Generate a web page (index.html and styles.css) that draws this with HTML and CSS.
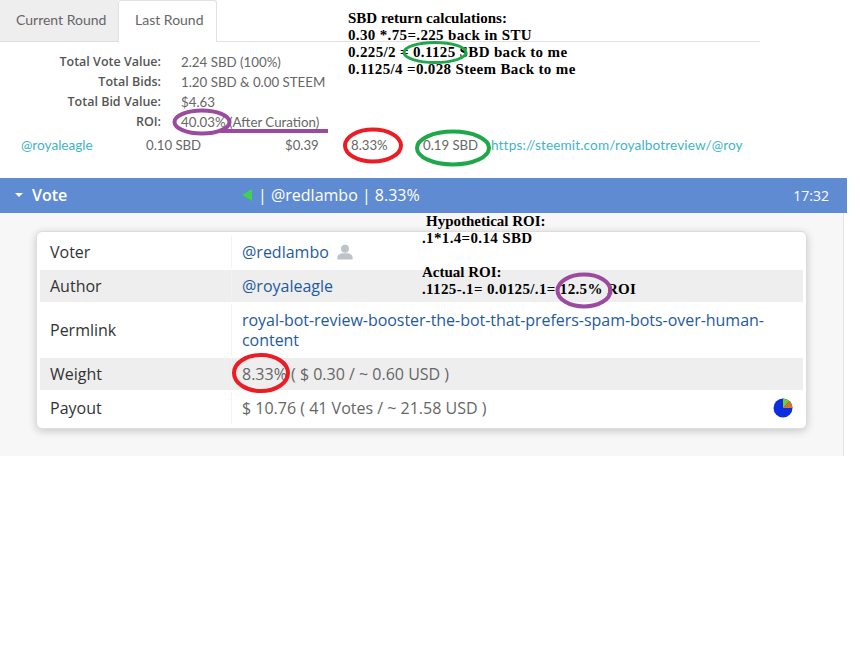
FILE: index.html
```html
<!DOCTYPE html>
<html lang="en">
<head>
	<meta charset="UTF-8">
	<title>Vote</title>
	<link rel="stylesheet" href="styles.css">
</head>
<body>
	<section class="round">
		<nav class="tabs">
			<a class="tab" href="javascript:;">Current Round</a>
			<a class="tab active" href="javascript:;">Last Round</a>
		</nav>
		<dl class="stats">
			<dt>Total Vote Value:</dt><dd>2.24 SBD (100%)</dd>
			<dt>Total Bids:</dt><dd>1.20 SBD &amp; 0.00 STEEM</dd>
			<dt>Total Bid Value:</dt><dd>$4.63</dd>
			<dt>ROI:</dt><dd>40.03% (After Curation)</dd>
		</dl>
		<div class="bid">
			<a class="bid-user" href="javascript:;">@royaleagle</a>
			<span class="bid-amount">0.10 SBD</span>
			<span class="bid-value">$0.39</span>
			<span class="bid-weight">8.33%</span>
			<span class="bid-return">0.19 SBD</span>
			<a class="bid-link" href="javascript:;">https://steemit.com/royalbotreview/@roy</a>
		</div>
	</section>

	<section class="vote">
		<header class="vote-bar">
			<span class="vote-title"><i class="caret"></i>Vote</span>
			<span class="vote-info"><i class="arrow"></i>| @redlambo | 8.33%</span>
			<span class="vote-time">17:32</span>
		</header>
		<div class="vote-body">
			<div class="card">
				<div class="row">
					<div class="key">Voter</div>
					<div class="val"><a href="javascript:;">@redlambo</a>
						<svg class="person" width="16" height="16" viewBox="0 0 17 16"><circle cx="8.500" cy="4.500" r="4.200"/><path d="M0.500 16v-2.500c0-2.600 3-4 5-4.300h6c2 .3 5 1.700 5 4.300V16z"/></svg>
					</div>
				</div>
				<div class="row">
					<div class="key">Author</div>
					<div class="val"><a href="javascript:;">@royaleagle</a></div>
				</div>
				<div class="row">
					<div class="key">Permlink</div>
					<div class="val"><a class="permlink" href="javascript:;">royal-bot-review-booster-the-bot-that-prefers-spam-bots-over-human-content</a></div>
				</div>
				<div class="row">
					<div class="key">Weight</div>
					<div class="val">8.33% ( $ 0.30 / ~ 0.60 USD )</div>
				</div>
				<div class="row">
					<div class="key">Payout</div>
					<div class="val val-split">$ 10.76 ( 41 Votes / ~ 21.58 USD )
						<svg width="20" height="20" viewBox="0 0 20 20"><circle cx="10" cy="10" r="9.500" fill="#0b2fe0"/><path d="M10 10V.5A9.500 9.500 0 0 1 16.500 3z" fill="#6fce3c"/><path d="M10 10l6.500-7a9.500 9.500 0 0 1 3 7z" fill="#d2762a"/></svg>
					</div>
				</div>
			</div>
		</div>
	</section>

	<!-- notes drawn over the screenshot -->
	<div class="note note-sbd">SBD return calculations:<br><span class="digits">0.30 *.75=.225 back in STU</span><br><span class="digits">0.225/2 = 0.1125 SBD back to me</span><br><span class="digits">0.1125/4 =0.028 Steem Back to me</span></div>
	<div class="note note-hypo">Hypothetical ROI:</div>
	<div class="note note-roi"><span class="digits">.1*1.4=0.14 SBD</span><br><br>Actual ROI:<br><span class="digits">.1125-.1= 0.0125/.1= 12.5% ROI</span></div>

	<svg class="marks" width="860" height="649" viewBox="0 0 860 649">
		<ellipse class="green thin" cx="435" cy="52.500" rx="31" ry="10"/>
		<ellipse class="purple" cx="202" cy="122" rx="27.500" ry="11.500"/>
		<path class="purple" d="M220 131H328"/>
		<ellipse class="red" cx="373" cy="145.500" rx="28" ry="16"/>
		<ellipse class="green" cx="453" cy="148" rx="36" ry="16.500"/>
		<ellipse class="red" cx="261" cy="373" rx="27" ry="18"/>
		<ellipse class="purple" cx="584" cy="290.500" rx="26.500" ry="16"/>
	</svg>
</body>
</html>
```

FILE: styles.css
```css
*{margin: 0; padding: 0; box-sizing: border-box;}
body{width: 860px; background: #fff; color: #666; font-family: "Open Sans", sans-serif; font-size: 14px;}
a{text-decoration: none;}
i{display: block;}

.round{height: 178px; width: 760px;}
.tabs{display: flex; height: 42px; border-bottom: 1px solid #e2e2e2; font-family: Lato, sans-serif; font-size: 14px;}
.tab{height: 42px; line-height: 40px; color: #666; background: #eee; border-bottom: 1px solid #ddd;}
.tab:first-child{width: 118px; padding-left: 16px;}
.tab.active{width: 99px; padding-left: 16px; line-height: 38px; background: #fff; border: 1px solid #e2e2e2; border-bottom: 0; border-radius: 3px 3px 0 0;}

.stats{display: grid; grid-template-columns: 161px 1fr; column-gap: 20px; grid-auto-rows: 20px; padding-top: 10px; line-height: 20px; font-size: 12.500px;}
.stats dt{text-align: right; font-weight: 600; color: #555;}
.stats dd{font-family: Lato, sans-serif; font-size: 13.300px; color: #666;}

.bid{display: grid; grid-template-columns: 125px 139px 66px 72px 68px 251px; padding: 3px 0 0 21px; line-height: 20px; font-family: Lato, sans-serif; font-size: 13.200px;}
.bid-user, .bid-link{color: #3fb5c4; font-size: 13.600px;}
.bid-link{white-space: nowrap; letter-spacing: .13px;}

.vote{width: 847px;}
.vote-bar{display: flex; align-items: center; height: 35px; padding-bottom: 1px; background: #5f8bd3; color: #fff;}
.vote-title{display: flex; align-items: center; width: 242px; padding-left: 15px; font-size: 16px; font-weight: 600;}
.caret{width: 0; height: 0; margin-right: 9px; border: 4px solid transparent; border-top-color: #fff; border-bottom: 0;}
.vote-info{display: flex; align-items: center; flex: 1; font-size: 16px;}
.arrow{width: 0; height: 0; margin-right: 6px; border: 6px solid transparent; border-right: 10px solid #3fd14f; border-left: 0;}
.vote-time{padding-right: 18px; font-size: 14px;}

.vote-body{height: 243px; margin-right: 3px; padding: 18px 36px 0 36px; background: #f7f7f7; border-right: 1px solid #e4e4e4;}
.card{padding: 4px 3px; background: #fff; border: 1px solid #ddd; border-radius: 6px; box-shadow: 0 2px 8px rgba(0,0,0,.2);}
.row{display: grid; grid-template-columns: 191px 1fr; min-height: 32px; margin-bottom: 2px; line-height: 20px; font-size: 16px;}
.row:last-child{margin-bottom: 0;}
.row:nth-child(even){background: #eee;}
.key{display: flex; align-items: center; padding-left: 10px; font-size: 16px; color: #333;}
.val{display: flex; align-items: center; flex-wrap: wrap; column-gap: 8px; padding: 6px 10px; border-left: 1px solid #f2f2f2; color: #666;}
.val a{color: #1f5a9e;}
.val a.permlink{letter-spacing: -.04px;}
.val-split{justify-content: space-between; flex-wrap: nowrap;}
.person{fill: #bcc3cb;}

.note{position: absolute; color: #000; font-family: "Liberation Serif", serif; font-size: 15px; font-weight: bold; line-height: 17px; white-space: nowrap;}
.note .digits{letter-spacing: .35px;}
.note-sbd{left: 348px; top: 10px;}
.note-hypo{left: 426px; top: 213px;}
.note-roi{left: 422px; top: 230px;}

.marks{position: absolute; left: 0; top: 0; pointer-events: none;}
.marks ellipse, .marks path{fill: none; stroke-width: 4;}
.marks .thin{stroke-width: 3;}
.marks .green{stroke: #1fa84a;}
.marks .purple{stroke: #9b4aa0;}
.marks .red{stroke: #ec1c24;}
```
